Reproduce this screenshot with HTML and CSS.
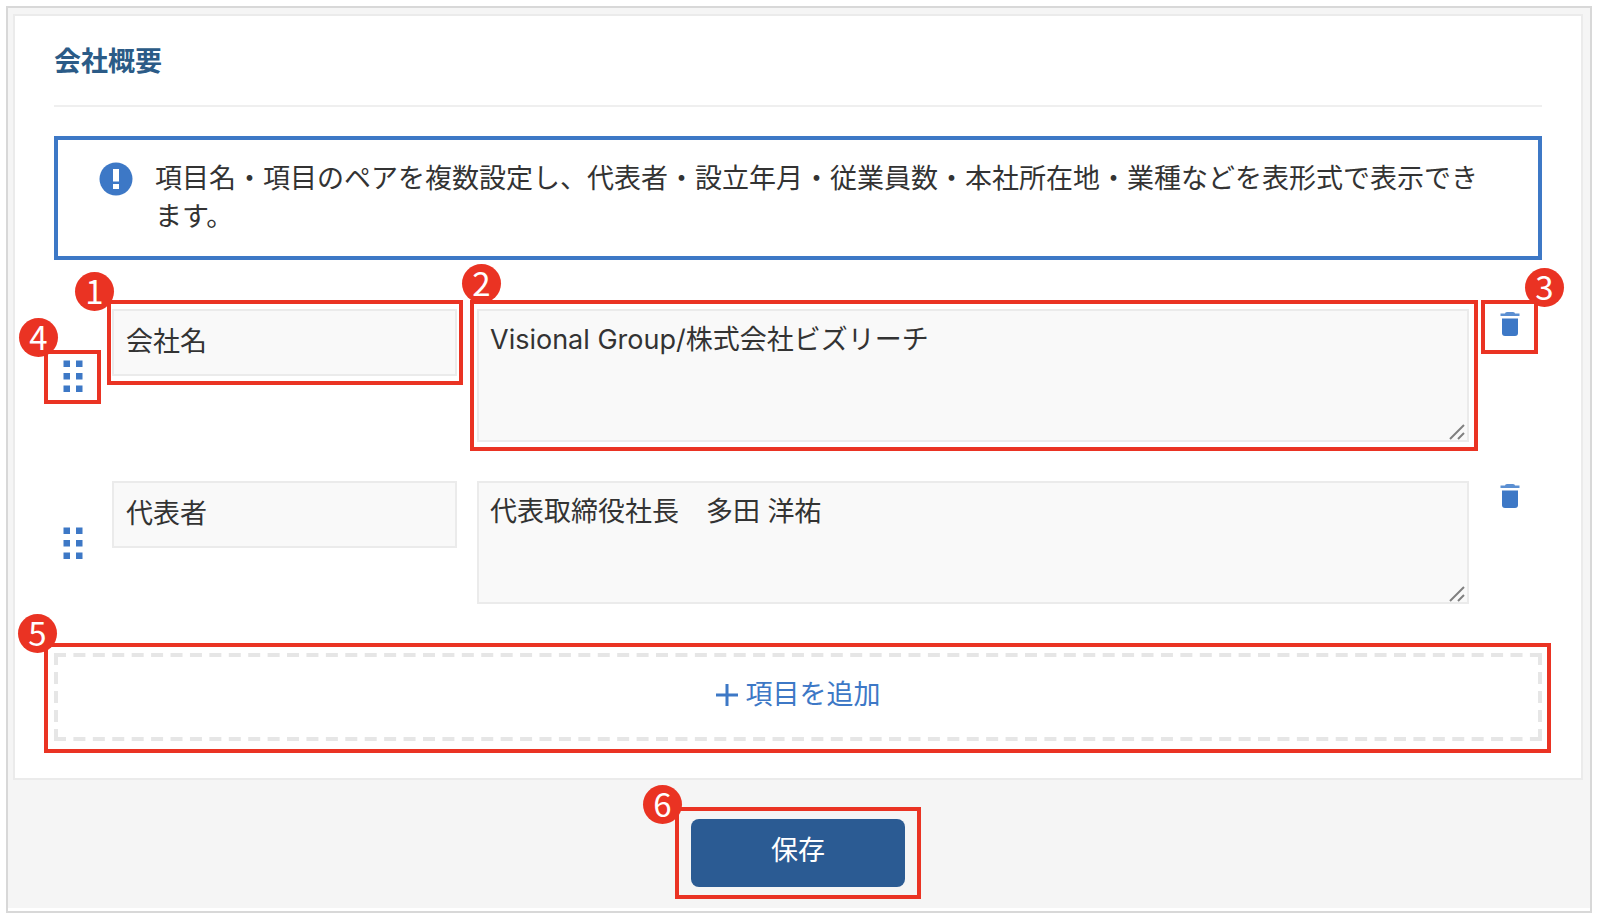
FILE: index.html
```html
<!DOCTYPE html>
<html lang="ja">
<head>
<meta charset="utf-8">
<meta name="viewport" content="width=device-width, initial-scale=1">
<title>会社概要</title>
<link rel="stylesheet" href="styles.css">
</head>
<body>
<svg class="defs" aria-hidden="true">
  <symbol id="trash" viewBox="0 0 20 24"><path d="M5 1.500Q5 0 7 0h6q2 0 2 1.500h4.500v2.500H.5V1.500z" fill="#5b8fd2"/><path d="M2 6.500h16V21a3 3 0 0 1-3 3H5a3 3 0 0 1-3-3z"/></symbol>
  <symbol id="grip" viewBox="0 0 20 32"><path d="M.5.500H7V7H.5zM13 .500h6.500V7H13zM.5 13H7v6.500H.5zM13 13h6.500v6.500H13zM.5 25.500H7V32H.5zM13 25.500h6.500V32H13z"/></symbol>
  <symbol id="resize" viewBox="0 0 16 16"><path d="M1 15 15 1M9 15l6-6" fill="none" stroke="#808080" stroke-width="2"/></symbol>
</svg>
<main class="frame">
  <form class="page">
    <section class="card">
      <h1 class="title">会社概要</h1>
      <div class="notice">
        <svg class="notice-icon" viewBox="0 0 34 34" aria-hidden="true"><circle cx="17" cy="17" r="16.500"/><path d="M14 7h6v12.500h-6zM14 22h6v5h-6z" fill="#fff"/></svg>
        <p class="notice-text">項目名・項目のペアを複数設定し、代表者・設立年月・従業員数・本社所在地・業種などを表形式で表示できます。</p>
      </div>
      <div class="rows">
        <div class="row">
          <div class="cell cell-grip">
            <button class="icon-button grip" type="button" aria-label="並べ替え"><svg class="grip-icon"><use href="#grip"/></svg></button>
            <span class="mark mark-4"><span class="badge">4</span></span>
          </div>
          <div class="cell">
            <input class="field name" type="text" value="会社名" aria-label="項目名">
            <span class="mark mark-1"><span class="badge">1</span></span>
          </div>
          <div class="cell">
            <textarea class="field value value-tall" aria-label="項目">Visional Group/株式会社ビズリーチ</textarea>
            <svg class="resize-icon" aria-hidden="true"><use href="#resize"/></svg>
            <span class="mark mark-2"><span class="badge">2</span></span>
          </div>
          <div class="cell">
            <button class="icon-button trash" type="button" aria-label="削除"><svg class="trash-icon"><use href="#trash"/></svg></button>
            <span class="mark mark-3"><span class="badge">3</span></span>
          </div>
        </div>
        <div class="row">
          <div class="cell cell-grip">
            <button class="icon-button grip" type="button" aria-label="並べ替え"><svg class="grip-icon"><use href="#grip"/></svg></button>
          </div>
          <div class="cell">
            <input class="field name" type="text" value="代表者" aria-label="項目名">
          </div>
          <div class="cell">
            <textarea class="field value" aria-label="項目">代表取締役社長　多田 洋祐</textarea>
            <svg class="resize-icon" aria-hidden="true"><use href="#resize"/></svg>
          </div>
          <div class="cell">
            <button class="icon-button trash" type="button" aria-label="削除"><svg class="trash-icon"><use href="#trash"/></svg></button>
          </div>
        </div>
      </div>
      <div class="cell">
        <button class="add" type="button">
          <svg class="dashes" aria-hidden="true">
            <line x1="0" y1="2" x2="100%" y2="2" pathLength="1488" stroke-dasharray="12 7.42"/>
            <line x1="0" y1="86" x2="100%" y2="86" pathLength="1488" stroke-dasharray="12 7.42"/>
          </svg>
          <svg class="dashes" aria-hidden="true">
            <line x1="2" y1="0" x2="2" y2="100%" stroke-dasharray="12 7"/>
          </svg>
          <svg class="dashes dashes-right" aria-hidden="true">
            <line x1="2" y1="0" x2="2" y2="100%" stroke-dasharray="12 7"/>
          </svg>
          <svg class="plus" viewBox="0 0 22 22" aria-hidden="true"><path d="M11 0v22M0 11h22"/></svg>
          <span>項目を追加</span>
        </button>
        <span class="mark mark-5"><span class="badge">5</span></span>
      </div>
    </section>
    <div class="actions">
      <div class="cell">
        <button class="save" type="button">保存</button>
        <span class="mark mark-6"><span class="badge">6</span></span>
      </div>
    </div>
  </form>
</main>
</body>
</html>
```
FILE: styles.css
```css
* {
  box-sizing: border-box;
}

body {
  margin: 0;
  padding: 6px 10px 5px 6px;
  background: #fff;
  color: #333;
  font-family: Inter, "Noto Sans CJK JP", sans-serif;
  font-size: 27px;
  line-height: 38px;
}

button,
input,
textarea {
  margin: 0;
  font: inherit;
  color: inherit;
}

button {
  border: 0;
  background: none;
  cursor: pointer;
}

.defs {
  position: absolute;
  width: 0;
  height: 0;
}

.frame {
  padding-bottom: 3px;
  border: 2px solid #d8d8d8;
}

.page {
  padding: 6px 7px 21px 5px;
  background: #f5f5f5;
}

.card {
  padding: 27px 39px 37px;
  border: 2px solid #ebebeb;
  background: #fff;
}

.title {
  margin: 0 0 29px;
  padding-bottom: 24px;
  border-bottom: 2px solid #efefef;
  color: #2b5b87;
  font-size: 27px;
  font-weight: 700;
}

.notice {
  display: flex;
  gap: 22px;
  padding: 20px 41px;
  border: 4px solid #3d78c6;
}

.notice-icon {
  flex: none;
  width: 34px;
  height: 34px;
  margin-top: 2px;
  fill: #3d78c6;
}

.notice-text {
  margin: 0;
}

.rows {
  display: grid;
  gap: 39px;
  margin: 49px 0;
}

.row {
  display: grid;
  grid-template-columns: 38px 345fr 992fr 41px;
  gap: 20px;
  align-items: start;
  padding-right: 12px;
}

.cell {
  position: relative;
  display: flex;
}

.cell-grip {
  align-self: center;
}

.icon-button {
  display: flex;
  align-items: center;
  justify-content: center;
  padding: 0;
  color: #3d78c6;
  fill: currentColor;
}

.grip {
  width: 38px;
  height: 38px;
}

.grip-icon {
  width: 20px;
  height: 32px;
}

.trash {
  width: 41px;
  height: 30px;
}

.trash-icon {
  width: 20px;
  height: 24px;
}

.field {
  width: 100%;
  min-width: 0;
  border: 2px solid #ebebeb;
  border-radius: 0;
  background: #f9f9f9;
}

.name {
  height: 67px;
  padding: 0 12px 6px;
}

.value {
  height: 123px;
  padding: 10px 11px;
  overflow: hidden;
  resize: none;
}

.value-tall {
  height: 133px;
}

.resize-icon {
  position: absolute;
  right: 4px;
  bottom: 2px;
  width: 16px;
  height: 16px;
  pointer-events: none;
}

.add {
  position: relative;
  display: flex;
  align-items: center;
  justify-content: center;
  gap: 8px;
  width: 100%;
  height: 88px;
  padding: 0 0 4px;
  color: #3d78c6;
}

.dashes {
  position: absolute;
  top: 0;
  left: 0;
  width: 100%;
  height: 100%;
  stroke: #e6e6e6;
  stroke-width: 4;
}

.dashes-right {
  left: auto;
  right: 0;
  width: 4px;
}

.plus {
  width: 22px;
  height: 22px;
  stroke: currentColor;
  stroke-width: 3;
}

.actions {
  display: flex;
  justify-content: center;
  padding-top: 39px;
}

.save {
  width: 214px;
  height: 68px;
  padding: 0 0 4px;
  border-radius: 8px;
  background: #2b5b93;
  color: #fff;
}

/* Numbered callouts laid over the controls */
.mark {
  position: absolute;
  z-index: 1;
  border: 4px solid #ea3323;
  pointer-events: none;
}

.badge {
  position: absolute;
  width: 39px;
  height: 39px;
  border-radius: 50%;
  background: #ea3323;
  color: #fff;
  font-family: "Noto Sans CJK JP", sans-serif;
  font-size: 33px;
  line-height: 37px;
  text-align: center;
}

.mark-1 { inset: -9px -6px -9px -5px; }
.mark-2 { inset: -9px -9px -9px -7px; }
.mark-3 { inset: -9px -8px -15px; }
.mark-4 { inset: -7px -9px -9px -10px; }
.mark-5 { inset: -10px -9px -12px -10px; }
.mark-6 { inset: -12px -16px; }

.mark-1 .badge { top: -32px; left: -36px; }
.mark-2 .badge { top: -40px; left: -12px; }
.mark-3 .badge { top: -36px; right: -30px; }
.mark-4 .badge { top: -36px; left: -29px; }
.mark-5 .badge { top: -33px; left: -30px; }
.mark-6 .badge { top: -26px; left: -36px; }
```
